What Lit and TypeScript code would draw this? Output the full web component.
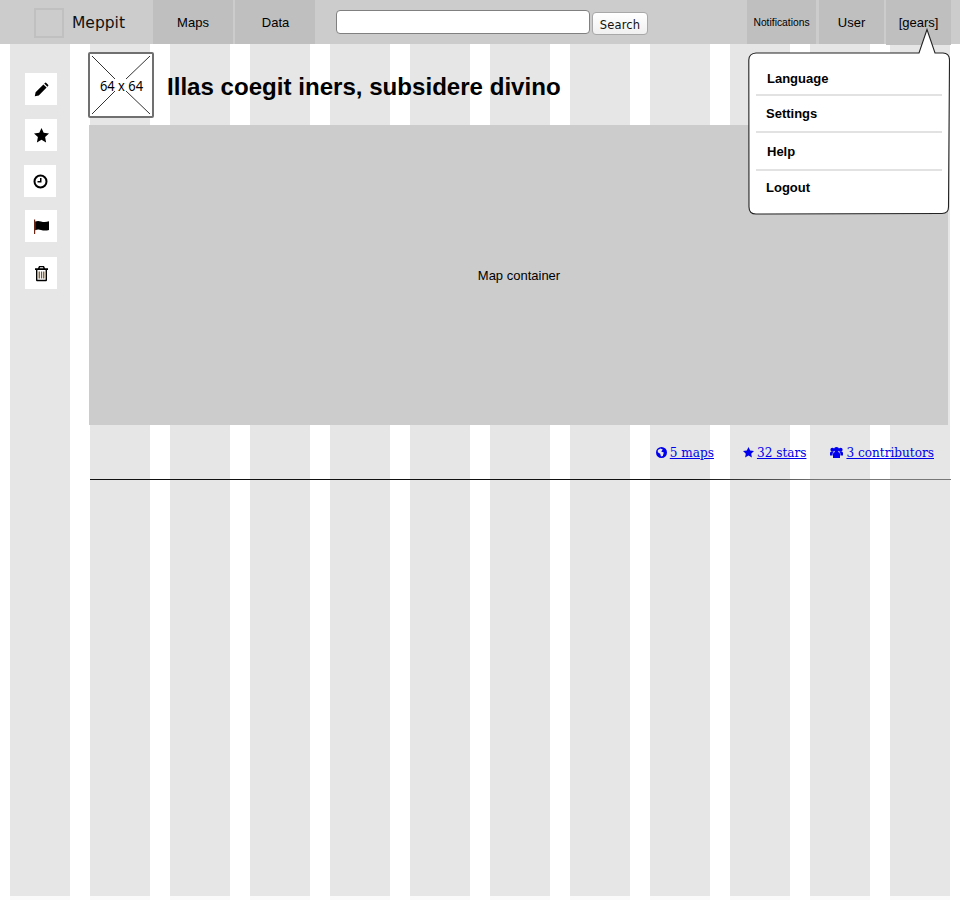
import { LitElement, html, css, svg } from "lit";
import { customElement } from "lit/decorators.js";

const icons = {
  pencil: svg`<path d="M1.8 15.2 L2.6 11.2 L10.4 3.4 L13.6 6.6 L5.8 14.4 Z M11.2 2.6 L11.9 1.9 Q12.6 1.3 13.3 1.9 L15.1 3.7 Q15.7 4.4 15.1 5.1 L14.4 5.8 Z"/>`,
  star: svg`<path d="M8.5 1 L10.7 5.8 L16 6.5 L12.1 10.1 L13.1 15.4 L8.5 12.8 L3.9 15.4 L4.9 10.1 L1 6.5 L6.3 5.8 Z"/>`,
  clock: svg`<path fill-rule="evenodd" d="M8.5 1.5 A7 7 0 1 0 8.5 15.5 A7 7 0 1 0 8.5 1.5 Z M8.5 3.5 A5 5 0 1 1 8.5 13.5 A5 5 0 1 1 8.5 3.5 Z M8 5 H9.5 V9.5 H5.5 V8 H8 Z"/>`,
  flag: svg`<path d="M1 1.5 H2.2 V16 H1 Z" fill="#6a2414"/><path d="M2.2 3.4 Q5 2.4 8 3.4 Q12 4.6 16 3.2 V12 Q12 13.2 8 12 Q5 11 2.2 12.2 Z"/>`,
  trash: svg`<path fill-rule="evenodd" d="M6 1 H11 L12 3.2 H15 V5 H14 V15 Q14 16.2 13 16.2 H4 Q3 16.2 3 15 V5 H2 V3.2 H5 Z M6.6 3.2 H10.4 L10 2.3 H7 Z M4.4 5 V14.8 H12.6 V5 Z"/><path d="M5.6 6.5 H6.9 V13.5 H5.6 Z M7.9 6.5 H9.2 V13.5 H7.9 Z M10.1 6.5 H11.4 V13.5 H10.1 Z" fill="#7a5a2a"/>`,
};

const globe = svg`<path fill-rule="evenodd" d="M5.5 0 A5.5 5.5 0 1 0 5.5 11 A5.5 5.5 0 1 0 5.5 0 Z M1.8 3 L4.6 1.4 L6.8 2.6 L5.2 4.4 L7.8 5.6 L6.8 9 L5 9.6 L4.2 6.8 L1.8 5.2 Z"/>`;
const star = svg`<path d="M5.5 0 L7.2 3.6 L11 4.1 L8.2 6.7 L8.9 10.5 L5.5 8.6 L2.1 10.5 L2.8 6.7 L0 4.1 L3.8 3.6 Z"/>`;
const group = svg`<circle cx="6.5" cy="2.6" r="2.6"/><circle cx="2.4" cy="2.8" r="2"/><circle cx="10.6" cy="2.8" r="2"/><path d="M3 11 V7 Q3 5 5 5 H8 Q10 5 10 7 V11 Z"/><path d="M0 8.4 V6 Q0 4.4 1.6 4.4 H3.6 Q2.6 5.4 2.6 7 V8.4 Z M13 8.4 V6 Q13 4.4 11.4 4.4 H9.4 Q10.4 5.4 10.4 7 V8.4 Z"/>`;

@customElement("app-root")
export class AppRoot extends LitElement {
  static styles = css`
    :host {
      display: block;
      position: relative;
      height: 900px;
      overflow: hidden;
      font-family: "Liberation Sans", Arial, sans-serif;
      color: #000;
    }

    .grid,
    .fade {
      position: absolute;
      display: grid;
      grid-template-columns: repeat(12, 60px);
      gap: 20px;
      padding-left: 10px;
    }

    .grid {
      inset: 0 0 4px 0;
    }

    .grid div {
      background: #e6e6e6;
    }

    .fade {
      inset: 896px 0 0 0;
    }

    .fade div {
      background: #fafafa;
    }

    .topbar {
      position: relative;
      height: 44px;
      background: #cccccc;
      display: flex;
      align-items: stretch;
    }

    .logo {
      width: 26px;
      height: 26px;
      border: 2px solid #c0c0c0;
      margin: 8px 8px 0 34px;
    }

    .brand {
      width: 81px;
      font-family: "DejaVu Sans", sans-serif;
      font-size: 15.5px;
      line-height: 46px;
      color: #111;
    }

    .tab {
      background: #bfbfbf;
      display: flex;
      align-items: center;
      justify-content: center;
      font-size: 13px;
      box-sizing: border-box;
    }

    .tab.maps {
      width: 80px;
      margin-right: 2px;
    }

    .tab.data {
      width: 80px;
      padding-left: 1px;
    }

    .search {
      display: flex;
      align-items: flex-start;
      margin-left: 21px;
      gap: 2px;
    }

    .search input {
      width: 254px;
      height: 24px;
      box-sizing: border-box;
      margin: 10px 0 0;
      padding: 0;
      background: #fff;
      border: 1px solid #808080;
      border-radius: 4px;
    }

    .search button {
      width: 56px;
      height: 23px;
      box-sizing: border-box;
      margin: 12px 0 0;
      padding: 2px 0 0;
      background: linear-gradient(#ffffff, #f0f0f0);
      border: 1px solid #a8a8a8;
      border-radius: 4px;
      font-family: "DejaVu Sans", sans-serif;
      font-size: 11.5px;
      letter-spacing: 0.2px;
      color: #111;
    }

    .right {
      margin-left: auto;
      margin-right: 9px;
      display: flex;
      gap: 3px;
    }

    .right .tab.notifications {
      width: 69px;
      font-size: 10.3px;
    }

    .right .tab.user {
      width: 65px;
      margin-right: -1px;
    }

    .right .tab.gears {
      width: 65px;
      height: 45px;
    }

    .body {
      position: relative;
      display: flex;
    }

    .side {
      width: 60px;
      margin-left: 10px;
      padding-top: 29px;
      display: flex;
      flex-direction: column;
      align-items: center;
      gap: 14px;
    }

    .tile {
      width: 32px;
      height: 32px;
      margin-left: 2px;
      background: #fff;
      display: flex;
      align-items: center;
      justify-content: center;
    }

    .tile.clock {
      margin-left: 0;
    }

    .tile.flag {
      margin-top: -1px;
      margin-bottom: 1px;
    }

    .tile svg {
      width: 17px;
      height: 17px;
    }

    .content {
      margin-left: 19px;
      width: 860px;
    }

    .head {
      display: flex;
      align-items: flex-start;
      height: 81px;
      gap: 13px;
    }

    .thumb {
      width: 66px;
      height: 66px;
      margin: 8px 0 0 -1px;
      flex: none;
    }

    h1 {
      margin: 29px 0 0;
      font-size: 24.1px;
      line-height: 28px;
      font-weight: bold;
      white-space: nowrap;
    }

    .map {
      height: 300px;
      width: 859px;
      box-sizing: border-box;
      padding-left: 1px;
      background: #cccccc;
      display: flex;
      align-items: center;
      justify-content: center;
      font-size: 13px;
    }

    .stats {
      height: 54px;
      box-sizing: border-box;
      padding: 2px 15px 0 0;
      display: flex;
      justify-content: flex-end;
      align-items: center;
      gap: 24px;
      font-family: "DejaVu Serif", serif;
      font-size: 12.1px;
    }

    .stats a {
      color: #0000ee;
      text-decoration: underline;
      white-space: nowrap;
    }

    .stats a:first-child {
      margin-right: 5px;
    }

    .stats svg {
      height: 11px;
      width: auto;
      margin-right: 3px;
      fill: currentColor;
      vertical-align: -1px;
    }

    .rule {
      height: 1px;
      width: 861px;
      margin-left: 1px;
      background: linear-gradient(90deg, #111 0, #111 70%, #777 85%, #777 100%);
    }

    .popup {
      position: absolute;
      left: 748px;
      top: 28px;
      width: 202px;
      height: 188px;
    }

    .bubble {
      position: absolute;
      inset: 0;
      width: 202px;
      height: 188px;
    }

    .menu {
      position: absolute;
      left: 8px;
      top: 33px;
      width: 186px;
      margin: 0;
      padding: 0;
      list-style: none;
      font-size: 13px;
      font-weight: bold;
    }

    .menu li {
      height: 35px;
      box-sizing: border-box;
      border-bottom: 2px solid #e2e2e2;
      padding: 10px 0 0 11px;
    }

    .menu li:nth-child(2) {
      height: 37px;
      padding-left: 10px;
    }

    .menu li:nth-child(3) {
      height: 38px;
      padding-top: 11px;
    }

    .menu li:last-child {
      border-bottom: 0;
      padding: 9px 0 0 10px;
    }
  `;

  render() {
    return html`
      <div class="grid">${Array.from({ length: 12 }, () => html`<div></div>`)}</div>
      <div class="fade">${Array.from({ length: 12 }, () => html`<div></div>`)}</div>
      <div class="topbar">
        <div class="logo"></div>
        <div class="brand">Meppit</div>
        <div class="tab maps">Maps</div>
        <div class="tab data">Data</div>
        <div class="search">
          <input type="text" />
          <button>Search</button>
        </div>
        <div class="right">
          <div class="tab notifications">Notifications</div>
          <div class="tab user">User</div>
          <div class="tab gears">[gears]</div>
        </div>
      </div>
      <div class="body">
        <div class="side">
          ${(["pencil", "star", "clock", "flag", "trash"] as const).map(
            (name) => html`<div class="tile ${name}">
              <svg viewBox="0 0 17 17">${icons[name]}</svg>
            </div>`
          )}
        </div>
        <div class="content">
          <div class="head">
            <svg class="thumb" viewBox="0 0 66 66">
              <rect x="1" y="1" width="64" height="64" rx="1" fill="#fff" stroke="#707070" stroke-width="2" />
              <path d="M4 4 L27 27 M62 4 L38 27 M4 62 L27 39 M62 62 L38 39" stroke="#333" stroke-width="1" fill="none" />
              <text x="12" y="39" font-family="Noto Sans, sans-serif" font-size="14.5" textLength="43" lengthAdjust="spacingAndGlyphs">64 x 64</text>
            </svg>
            <h1>Illas coegit iners, subsidere divino</h1>
          </div>
          <div class="map">Map container</div>
          <div class="stats">
            <a href="#"><svg viewBox="0 0 11 11">${globe}</svg>5 maps</a>
            <a href="#"><svg viewBox="0 0 11 11">${star}</svg>32 stars</a>
            <a href="#"><svg viewBox="0 0 13 11">${group}</svg>3 contributors</a>
          </div>
          <div class="rule"></div>
        </div>
      </div>
      <div class="popup">
        <svg class="bubble" viewBox="0 0 202 188">
          <path
            d="M8 25 L171 25 L179 1.5 L187 25 L195 25 Q201.5 25.5 201.5 32 L200.5 179 Q200.5 185.5 194 185.5 L8 186 Q1 186 1 179 L.8 32 Q1 25.5 8 25 Z"
            fill="#fff"
            stroke="#222"
            stroke-width="1.1"
          />
        </svg>
        <ul class="menu">
          <li>Language</li>
          <li>Settings</li>
          <li>Help</li>
          <li>Logout</li>
        </ul>
      </div>
    `;
  }
}
